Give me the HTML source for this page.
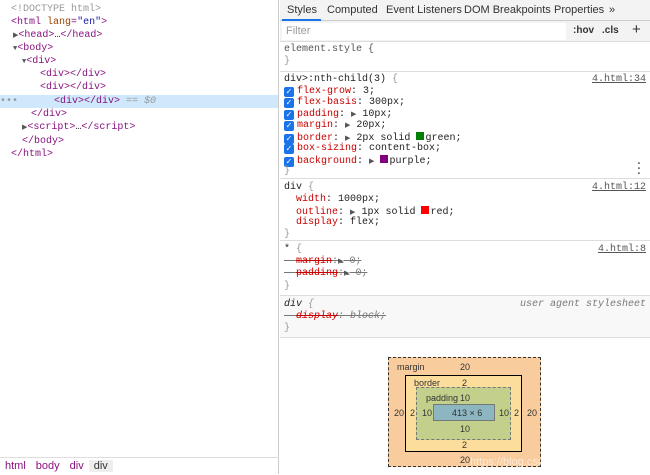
<!DOCTYPE html>
<html><head><style>
*{margin:0;padding:0;box-sizing:border-box}
body{width:650px;height:474px;overflow:hidden;background:#fff;font-family:"Liberation Mono",monospace;font-size:10px;color:#222;position:relative}
.left{position:absolute;left:0;top:0;width:279px;height:474px;border-right:1px solid #ccc}
.row{position:absolute;left:0;width:278px;height:13px;line-height:13px;white-space:pre}
.t{color:#881280}.a{color:#994500}.v{color:#1a1aa6}.g{color:#999}
.tri{font-size:7px;color:#555}
.crumb{position:absolute;left:0;top:457px;width:279px;height:17px;border-top:1px solid #ddd;font-family:"Liberation Sans",sans-serif;font-size:11px;line-height:17px;color:#881280}
.crumb span{padding:0 5px}
.right{position:absolute;left:280px;top:0;width:370px;height:474px}
.tabs{height:21px;background:#f3f3f3;border-bottom:1px solid #ccc;font-family:"Liberation Sans",sans-serif;font-size:11px;color:#333;position:relative}
.tabs span{position:absolute;top:4px}
.filt{height:21px;background:#f3f3f3;border-bottom:1px solid #ddd;position:relative;font-family:"Liberation Sans",sans-serif;font-size:11px}
.sec{position:absolute;left:0;width:370px;border-bottom:1px solid #ddd;font-size:10px}
.l{position:absolute;left:4px;white-space:pre;line-height:11px}
.p{color:#c80000}
.src{position:absolute;right:4px;text-decoration:underline;color:#555}
.cb{display:inline-block;width:10px;height:10px;background:#1a73e8;border-radius:2px;vertical-align:-1px;margin-right:3px;color:#fff;font-size:8px;line-height:10px;text-align:center;font-family:"DejaVu Sans",sans-serif}
.sw{display:inline-block;width:8px;height:8px;vertical-align:0px;margin-right:1px}
.s{text-decoration:line-through}
.bm{font-family:"Liberation Sans",sans-serif;font-size:9px;color:#333}
.bx{position:absolute}
.n{position:absolute;font-family:"Liberation Sans",sans-serif;font-size:9px;color:#333}
</style></head><body>
<div class="left">
<div class="row g" style="top:3px;left:11px">&lt;!DOCTYPE html&gt;</div>
<div class="row" style="top:16px;left:11px"><span class="t">&lt;html</span> <span class="a">lang</span><span class="t">=</span><span class="v">"en"</span><span class="t">&gt;</span></div>
<div class="row" style="top:29px;left:13px"><span class="tri">▶</span><span class="t">&lt;head&gt;</span>…<span class="t">&lt;/head&gt;</span></div>
<div class="row" style="top:42px;left:13px"><span class="tri">▼</span><span class="t">&lt;body&gt;</span></div>
<div class="row" style="top:55px;left:22px"><span class="tri">▼</span><span class="t">&lt;div&gt;</span></div>
<div class="row" style="top:68px;left:40px"><span class="t">&lt;div&gt;&lt;/div&gt;</span></div>
<div class="row" style="top:81px;left:40px"><span class="t">&lt;div&gt;&lt;/div&gt;</span></div>
<div class="row" style="top:95px;left:0;background:#cfe8fc"><span class="g">•••      </span><span class="t">&lt;div&gt;&lt;/div&gt;</span><span class="g"> == <i>$0</i></span></div>
<div class="row" style="top:108px;left:31px"><span class="t">&lt;/div&gt;</span></div>
<div class="row" style="top:121px;left:22px"><span class="tri">▶</span><span class="t">&lt;script&gt;</span>…<span class="t">&lt;/script&gt;</span></div>
<div class="row" style="top:135px;left:22px"><span class="t">&lt;/body&gt;</span></div>
<div class="row" style="top:148px;left:11px"><span class="t">&lt;/html&gt;</span></div>
<div class="crumb"><span>html</span><span>body</span><span>div</span><span style="background:#eee;color:#333">div</span></div>
</div>
<div class="right">
<div class="tabs">
<span style="left:7px">Styles</span><span style="left:47px">Computed</span><span style="left:106px">Event Listeners</span><span style="left:184px">DOM Breakpoints</span><span style="left:274px">Properties</span><span style="left:329px">»</span>
<div style="position:absolute;left:2px;top:19px;width:39px;height:2px;background:#1a73e8"></div>
</div>
<div class="filt">
<div style="position:absolute;left:2px;top:2px;width:284px;height:17px;background:#fff;color:#999;padding:2px 4px">Filter</div>
<span style="position:absolute;left:293px;top:4px;font-weight:bold;font-size:10px;color:#333">:hov</span>
<span style="position:absolute;left:322px;top:4px;font-weight:bold;font-size:10px;color:#333">.cls</span>
<span style="position:absolute;left:352px;top:0px;font-size:15px;color:#333">+</span>
</div>
<div class="sec" style="top:42px;height:30px">
<div class="l g" style="top:2px;color:#555">element.style {</div>
<div class="l g" style="top:14px">}</div>
</div>
<div class="sec" style="top:72px;height:107px">
<div class="l" style="top:2px">div&gt;:nth-child(3) <span class="g">{</span></div>
<span class="src" style="top:2px">4.html:34</span>
<div class="l" style="top:14px"><span class="cb">✓</span><span class="p">flex-grow</span>: 3;</div>
<div class="l" style="top:25px"><span class="cb">✓</span><span class="p">flex-basis</span>: 300px;</div>
<div class="l" style="top:37px"><span class="cb">✓</span><span class="p">padding</span>: <span class="tri">▶</span> 10px;</div>
<div class="l" style="top:48px"><span class="cb">✓</span><span class="p">margin</span>: <span class="tri">▶</span> 20px;</div>
<div class="l" style="top:60px"><span class="cb">✓</span><span class="p">border</span>: <span class="tri">▶</span> 2px solid <span class="sw" style="background:green"></span>green;</div>
<div class="l" style="top:71px"><span class="cb">✓</span><span class="p">box-sizing</span>: content-box;</div>
<div class="l" style="top:83px"><span class="cb">✓</span><span class="p">background</span>: <span class="tri">▶</span> <span class="sw" style="background:purple"></span>purple;</div>
<div class="l g" style="top:94px">}</div>
<span style="position:absolute;right:9px;top:90px;font-size:11px;font-weight:bold;color:#555;line-height:5px;font-family:'Liberation Sans'">·<br>·<br>·</span>
</div>
<div class="sec" style="top:179px;height:62px">
<div class="l" style="top:3px">div <span class="g">{</span></div>
<span class="src" style="top:3px">4.html:12</span>
<div class="l" style="top:15px">  <span class="p">width</span>: 1000px;</div>
<div class="l" style="top:27px">  <span class="p">outline</span>: <span class="tri">▶</span> 1px solid <span class="sw" style="background:red"></span>red;</div>
<div class="l" style="top:38px">  <span class="p">display</span>: flex;</div>
<div class="l g" style="top:50px">}</div>
</div>
<div class="sec" style="top:241px;height:55px">
<div class="l" style="top:3px">* <span class="g">{</span></div>
<span class="src" style="top:3px">4.html:8</span>
<div class="l s" style="top:15px;color:#777">  <span class="p s">margin</span>:<span class="tri">▶</span> 0;</div>
<div class="l s" style="top:27px;color:#777">  <span class="p s">padding</span>:<span class="tri">▶</span> 0;</div>
<div class="l g" style="top:40px">}</div>
</div>
<div class="sec" style="top:296px;height:42px;background:#f8f8f8">
<div class="l" style="top:3px;font-style:italic">div <span class="g">{</span></div>
<span style="position:absolute;right:4px;top:3px;font-style:italic;color:#777">user agent stylesheet</span>
<div class="l s" style="top:15px;font-style:italic;color:#777">  <span class="p s">display</span>: block;</div>
<div class="l g" style="top:27px">}</div>
</div>
</div>
<div class="bx" style="left:388px;top:357px;width:153px;height:110px;background:#f9cc9d;border:1px dashed #333"></div>
<div class="bx" style="left:405px;top:375px;width:117px;height:77px;background:#fddd9b;border:1px solid #000"></div>
<div class="bx" style="left:416px;top:387px;width:95px;height:53px;background:#c3d08b;border:1px dashed #777"></div>
<div class="bx" style="left:433px;top:404px;width:62px;height:17px;background:#8cb6c0;border:1px solid #777"></div>
<span class="n" style="left:397px;top:362px">margin</span><span class="n" style="left:460px;top:362px">20</span>
<span class="n" style="left:414px;top:378px">border</span><span class="n" style="left:462px;top:378px">2</span>
<span class="n" style="left:426px;top:393px">padding</span><span class="n" style="left:460px;top:393px">10</span>
<span class="n" style="left:452px;top:408px">413 × 6</span>
<span class="n" style="left:394px;top:408px">20</span><span class="n" style="left:410px;top:408px">2</span><span class="n" style="left:422px;top:408px">10</span>
<span class="n" style="left:499px;top:408px">10</span><span class="n" style="left:514px;top:408px">2</span><span class="n" style="left:527px;top:408px">20</span>
<span class="n" style="left:460px;top:424px">10</span>
<span class="n" style="left:462px;top:440px">2</span>
<span class="n" style="left:460px;top:455px">20</span>
<span style="position:absolute;left:470px;top:456px;font-family:'Liberation Sans';font-size:11px;color:#fff;opacity:.6">https://blog.csdn.net/weixin_42265852</span>
</body></html>
